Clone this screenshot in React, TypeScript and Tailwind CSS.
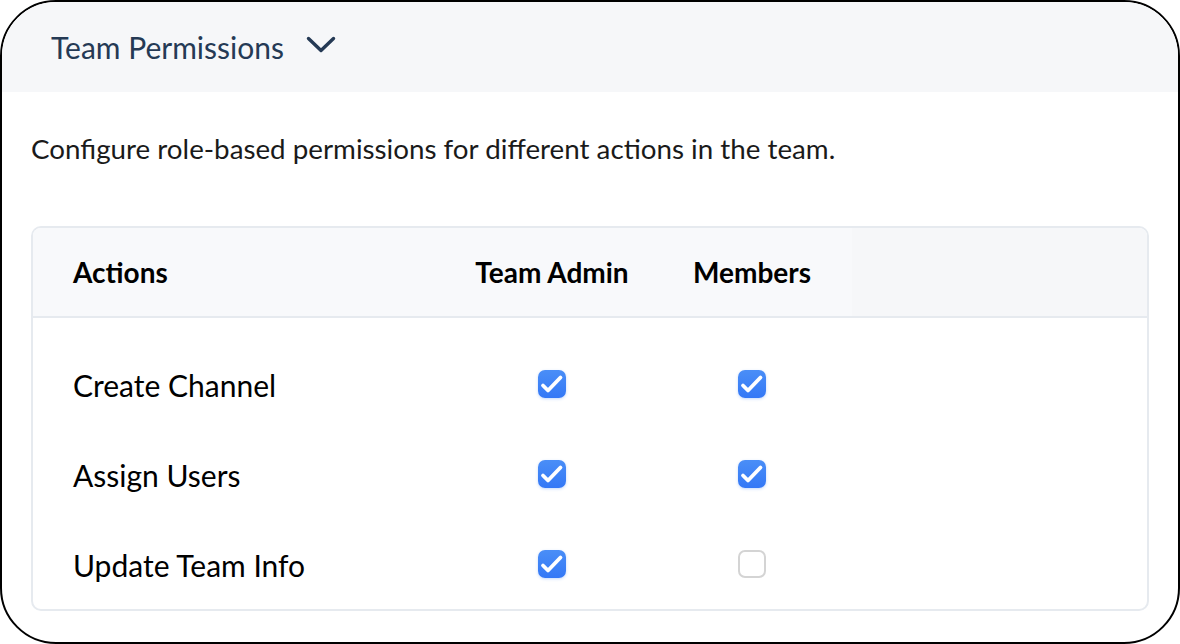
import React from 'react';

type Row = { label: string; admin: boolean; members: boolean };

const rows: Row[] = [
  { label: 'Create Channel', admin: true, members: true },
  { label: 'Assign Users', admin: true, members: true },
  { label: 'Update Team Info', admin: true, members: false },
];

function Check({ checked }: { checked: boolean }) {
  if (!checked) {
    return (
      <span className="inline-block w-[28px] h-[28px] rounded-[7px] border-2 border-[#d4d4d4] bg-white" />
    );
  }
  return (
    <span className="inline-flex w-[28px] h-[28px] rounded-[7px] bg-gradient-to-b from-[#4a8ef7] to-[#3478f6] shadow-[0_1px_3px_rgba(59,130,246,0.3)]">
      <svg width="28" height="28" viewBox="0 0 28 28" fill="none">
        <path d="M5 15.5l5 5L22.5 7.5" stroke="white" strokeWidth="3.8" strokeLinecap="round" strokeLinejoin="round" />
      </svg>
    </span>
  );
}

export default function App() {
  return (
    <div className="w-[1180px] h-[644px] bg-white" style={{ fontFamily: 'Lato, "Open Sans", sans-serif' }}>
      <div className="h-full rounded-[56px] border-2 border-black overflow-hidden flex flex-col">
        {/* Header */}
        <div className="h-[90px] shrink-0 bg-[#f6f7f9] flex items-center pl-[49px] gap-[22px]">
          <span className="text-[30px] text-[#253a55] leading-none">Team Permissions</span>
          <svg width="30" height="18" viewBox="0 0 30 18" fill="none" className="-mt-[4px]">
            <path d="M2.5 2.5L15 14.5 27.5 2.5" stroke="#253a55" strokeWidth="3.4" strokeLinecap="round" strokeLinejoin="round" />
          </svg>
        </div>

        <div className="px-[29px] pt-[43px]">
          <p className="text-[27.75px] text-[#1a1a1a] leading-none">
            Configure role-based permissions for different actions in the team.
          </p>

          <div className="mt-[63px] rounded-[10px] border-2 border-[#e6eaef] overflow-hidden">
            <div className="flex h-[90px] bg-[#f6f7f9] border-b-2 border-[#e6eaef] text-[28px] font-bold text-black">
              <div className="w-[419px] pl-[40px] flex items-center bg-[#f8f9fb]">Actions</div>
              <div className="w-[200px] flex items-center justify-center bg-[#f8f9fb]">Team Admin</div>
              <div className="w-[200px] flex items-center justify-center bg-[#f8f9fb]">Members</div>
              <div className="flex-1" />
            </div>
            <div className="pt-[21px]">
              {rows.map((r) => (
                <div key={r.label} className="flex h-[90px] items-center text-[30px] text-black">
                  <div className="w-[419px] pl-[40px] pt-[3px]">{r.label}</div>
                  <div className="w-[200px] flex justify-center">
                    <Check checked={r.admin} />
                  </div>
                  <div className="w-[200px] flex justify-center">
                    <Check checked={r.members} />
                  </div>
                  <div className="flex-1" />
                </div>
              ))}
            </div>
          </div>
        </div>
      </div>
    </div>
  );
}
